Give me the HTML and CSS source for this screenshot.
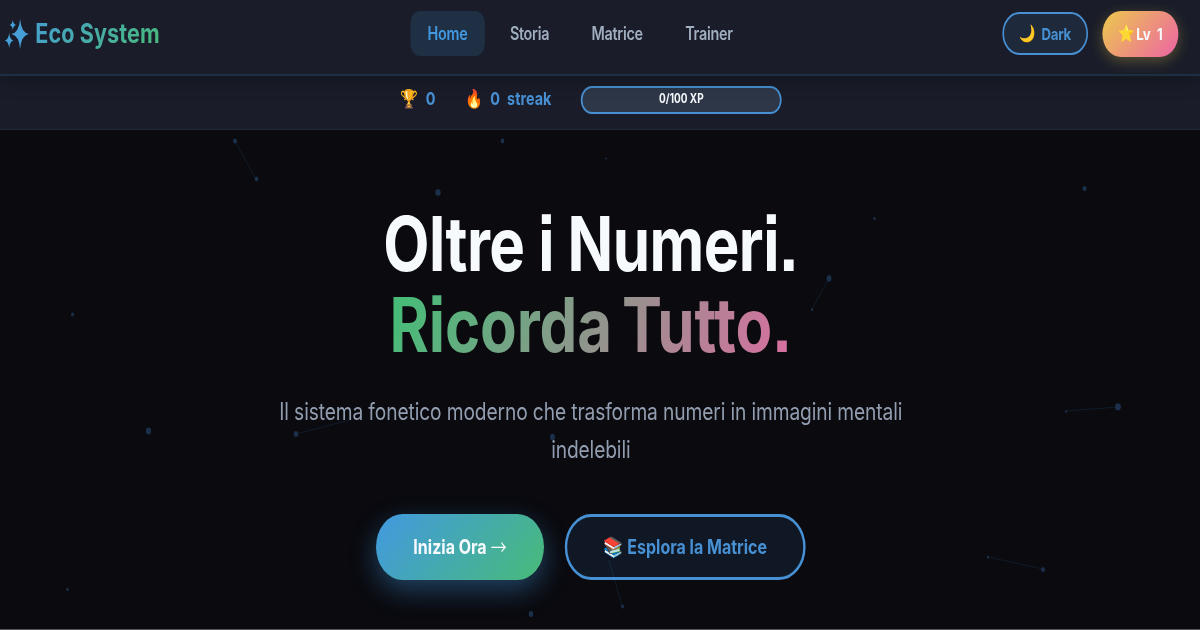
FILE: index.html
```html
<!DOCTYPE html>
<html lang="it">
<head>
<meta charset="utf-8">
<title>Eco System</title>
<link rel="stylesheet" href="styles.css">
</head>
<body>
<div class="viewport">
<div class="page">
  <svg class="particles" viewBox="0 0 1200 630" preserveAspectRatio="none">
    <g class="links">
      <path d="M235 141L256 179M829 278L812 309M1066 411L1118 407M988 557L1043 569M296 434L350 420M609 560L622 606"/>
      <path class="faint" d="M829 278L874 218"/>
    </g>
    <g class="dots">
      <ellipse cx="235" cy="141" rx="2" ry="2.5"/><ellipse cx="256.500" cy="179" rx="1.800" ry="2.400"/>
      <ellipse cx="502.500" cy="141" rx="1.800" ry="2.400"/><ellipse cx="606" cy="158.500" rx=".8" ry="1.100"/>
      <ellipse cx="438" cy="192.500" rx="2.700" ry="3.300"/><ellipse cx="1084.500" cy="188.500" rx="2" ry="2.600"/>
      <ellipse cx="874.500" cy="218.500" rx="1.200" ry="1.600"/><ellipse cx="829" cy="278.500" rx="2.400" ry="3.200"/>
      <ellipse cx="812" cy="309.500" rx="1.100" ry="1.500"/><ellipse cx="72.500" cy="314.500" rx="1.500" ry="2"/>
      <ellipse cx="148.500" cy="431" rx="2.600" ry="3.400"/><ellipse cx="296" cy="434" rx="2.300" ry="3"/>
      <ellipse cx="1066" cy="411.500" rx="1" ry="1.400"/><ellipse cx="1118" cy="406.800" rx="2.900" ry="3.600"/>
      <ellipse cx="552.500" cy="437" rx="2.500" ry="3.200"/><ellipse cx="988" cy="557" rx="1.200" ry="1.500"/>
      <ellipse cx="1043" cy="569.500" rx="2" ry="2.600"/><ellipse cx="67.500" cy="589.500" rx="1.300" ry="1.700"/>
      <ellipse cx="531" cy="614" rx="2.300" ry="3"/><ellipse cx="622.500" cy="606.500" rx="1.500" ry="2"/>
    </g>
  </svg>
  <header class="header">
    <div class="logo">
      <svg class="sparkles" viewBox="0 0 34 30" preserveAspectRatio="none">
        <path d="M21 0Q22.500 13.500 33 15Q22.500 16.500 21 30Q19.500 16.500 9 15Q19.500 13.500 21 0ZM11 1Q11.800 5.500 15.500 6Q11.800 6.500 11 11Q10.200 6.500 6.500 6Q10.200 5.500 11 1ZM6 14Q7 20.700 12 21.500Q7 22.300 6 29Q5 22.300 0 21.500Q5 20.700 6 14Z"/>
      </svg>
      <span class="logo-text">Eco System</span>
    </div>
    <nav class="nav">
      <a class="nav-link active">Home</a>
      <a class="nav-link">Storia</a>
      <a class="nav-link">Matrice</a>
      <a class="nav-link">Trainer</a>
    </nav>
    <div class="actions">
      <button class="theme"><span class="emoji">🌙</span><span>Dark</span></button>
      <div class="level"><span class="emoji">⭐</span><span>Lv</span><span class="level-number">1</span></div>
    </div>
  </header>
  <section class="stats">
    <div class="stat"><span class="emoji">🏆</span><span>0</span></div>
    <div class="stat"><span class="emoji">🔥</span><span>0</span><span>streak</span></div>
    <div class="xp">0/100 XP</div>
  </section>
  <main class="hero">
    <h1 class="title"><span class="line">Oltre i Numeri.</span><span class="line gradient">Ricorda Tutto.</span></h1>
    <p class="subtitle">Il sistema fonetico moderno che trasforma numeri in immagini mentali indelebili</p>
    <div class="cta">
      <button class="btn primary"><span>Inizia Ora</span><span class="arrow">→</span></button>
      <button class="btn secondary"><span class="emoji">📚</span><span>Esplora la Matrice</span></button>
    </div>
  </main>
</div>
</div>
</body>
</html>
```
FILE: styles.css
```css
* { box-sizing: border-box; }
html { overflow: hidden; }
body { margin: 0; background: #0a0a0f; }
.viewport { width: 1200px; height: 630px; overflow: hidden; }
.page {
  position: relative; width: 1500px; height: 630px; overflow: hidden;
  display: flex; flex-direction: column;
  transform: scaleX(.8); transform-origin: 0 0;
  font-family: Inter, "Noto Sans", sans-serif; color: #f7fafc;
  background: #0a0a0f; border-bottom: 1px solid #55565b;
}
button { font: inherit; margin: 0; }
.emoji { font-family: "Noto Color Emoji", sans-serif; font-weight: 400; letter-spacing: 0; }
.particles { position: absolute; inset: 0; width: 1500px; height: 630px; }
.links { fill: none; stroke: #111c29; stroke-width: 1; }
.faint { stroke: #0c1118; }
.dots { fill: #1b304a; }
.header {
  position: relative; z-index: 2; height: 76px; padding: 0 27px 7px 6px;
  display: grid; grid-template-columns: 507px 1fr auto; align-items: center;
  background: #1a1d29; border-bottom: 2px solid #1e2f42;
  box-shadow: 0 4px 20px rgba(0,0,0,.3);
}
.logo { display: flex; align-items: center; gap: 7px; padding-top: 1px; }
.sparkles { width: 31px; height: 30px; fill: #469fd6; }
.logo-text {
  font-size: 27px; line-height: 36px; font-weight: 700; letter-spacing: .1px;
  background: linear-gradient(135deg, #469fd0, #48bb78);
  -webkit-background-clip: text; background-clip: text; color: transparent;
}
.nav { display: flex; gap: 10px; }
.nav-link {
  height: 45px; padding: 0 21.5px; border-radius: 12px; line-height: 45px;
  font-size: 18px; font-weight: 600; letter-spacing: -.35px; color: #a0aec0;
}
.active { color: #4299e1; background: #1f3044; }
.actions { display: flex; align-items: center; gap: 18px; }
.theme {
  width: 107px; height: 43px; border: 2px solid #4790d3; border-radius: 25px;
  display: flex; align-items: center; justify-content: center; gap: 7px; padding: 0;
  background: #1e2a3c; color: #4790d3; font-size: 16.5px; font-weight: 700; letter-spacing: -.3px;
}
.level {
  width: 95px; height: 46px; border-radius: 25px;
  display: flex; align-items: center; justify-content: center; gap: 2px;
  font-size: 16.5px; font-weight: 700; background: linear-gradient(135deg, #ecc94b, #ed64a6);
  box-shadow: 0 4px 15px rgba(236,201,75,.3);
}
.level-number { margin-left: 6px; }
.stats {
  height: 54px; padding-right: 22px; padding-bottom: 6px; flex: none;
  display: flex; align-items: center; justify-content: center;
  background: #1a1d29; border-bottom: 1px solid #1c2a3b;
}
.stat { display: flex; align-items: center; gap: 9px; font-size: 18px; font-weight: 700; color: #4790d3; margin-right: 37px; padding-bottom: 2px; }
.xp {
  width: 251px; height: 28px; border: 2px solid #4790d3; border-radius: 15px;
  background: #2d3748; text-align: center; line-height: 22px; font-size: 12.5px; font-weight: 700;
}
.hero { position: relative; padding: 73px 23px 0 0; display: flex; flex-direction: column; align-items: center; }
.title { margin: 0; font-size: 75px; line-height: 81px; font-weight: 700; letter-spacing: -.7px; text-align: center; font-feature-settings: "ss07", "ss08"; }
.line { display: block; width: max-content; margin: 0 auto; }
.gradient { letter-spacing: -.2px; word-spacing: -5px; background: linear-gradient(120deg, #48bb78 5%, #ed64a6 112%); -webkit-background-clip: text; background-clip: text; color: transparent; }
.subtitle { width: 810px; margin: 28px 0 0; font-size: 24px; line-height: 38px; font-weight: 400; letter-spacing: -.15px; color: #929eb0; text-align: center; }
.cta { display: flex; gap: 26px; margin-top: 45px; }
.btn { height: 66px; border: 0; border-radius: 50px; display: flex; align-items: center; justify-content: center; gap: 5px; padding: 0; font-size: 20px; font-weight: 700; letter-spacing: 0; }
.arrow { font-family: "Noto Sans CJK JP", sans-serif; font-weight: 400; line-height: 24px; }
.primary { width: 210px; color: #f7fafc; background: linear-gradient(135deg, #4299e1, #48bb78); box-shadow: 0 10px 30px rgba(66,153,225,.4); }
.secondary { width: 301px; color: #4790d3; border: 3px solid #4790d3; background: rgba(66,153,225,.1); }
```
